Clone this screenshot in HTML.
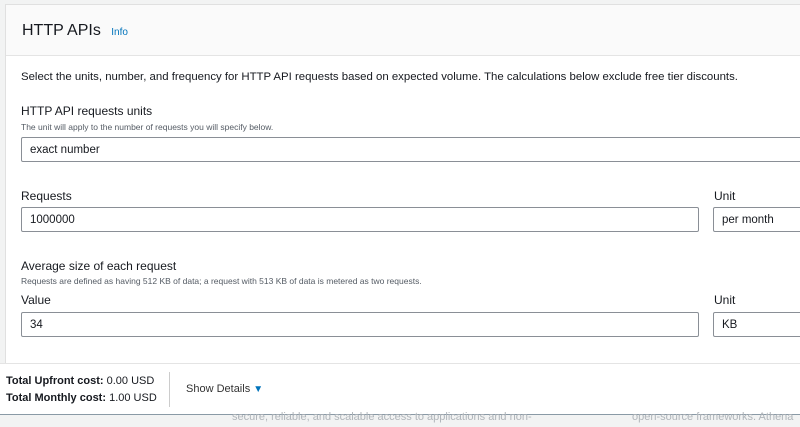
<!DOCTYPE html>
<html><head><style>
body{margin:0;width:800px;height:426px;overflow:hidden;background:#f2f3f3;font-family:"Liberation Sans",sans-serif;color:#16191f;position:relative}
.panel{position:absolute;left:5px;top:4px;width:800px;height:420px;background:#fff;border:1px solid #e0e0e0;border-right:none}
.hdr{height:50px;background:#fafafa;border-bottom:1px solid #e4e4e4;position:relative}
.t{position:absolute;font-size:12px;white-space:nowrap}
.s{color:#545b64}
.in{position:absolute;height:25px;border:1px solid #8a8f96;border-radius:2px;box-sizing:border-box;font-size:11.5px;padding:6px 0 0 8px;background:#fff}
.foot{position:absolute;left:0;top:363px;width:800px;height:50px;background:#fff;border-top:1px solid #e4e4e4}
.bot{position:absolute;left:0;top:414px;width:800px;height:12px;background:#f2f3f3;border-top:1px solid #8a9aa6}
</style></head><body>
<div class="panel"><div class="hdr">
<div class="t" style="left:16px;top:17px;font-size:16px">HTTP APIs <span style="font-size:10px;color:#0073bb;margin-left:6px">Info</span></div></div></div>
<div class="t" style="left:21px;top:71px;font-size:11.4px">Select the units, number, and frequency for HTTP API requests based on expected volume. The calculations below exclude free tier discounts.</div>
<div class="t" style="left:21px;top:104px">HTTP API requests units</div>
<div class="t s" style="left:21px;top:122px;font-size:8.5px">The unit will apply to the number of requests you will specify below.</div>
<div class="in" style="left:21px;top:137px;width:800px">exact number</div>
<div class="t" style="left:21px;top:189px">Requests</div>
<div class="t" style="left:714px;top:189px">Unit</div>
<div class="in" style="left:21px;top:207px;width:678px">1000000</div>
<div class="in" style="left:713px;top:207px;width:100px">per month</div>
<div class="t" style="left:21px;top:259px">Average size of each request</div>
<div class="t s" style="left:21px;top:276px;font-size:8.5px">Requests are defined as having 512 KB of data; a request with 513 KB of data is metered as two requests.</div>
<div class="t" style="left:21px;top:293px">Value</div>
<div class="t" style="left:714px;top:293px">Unit</div>
<div class="in" style="left:21px;top:312px;width:678px">34</div>
<div class="in" style="left:713px;top:312px;width:100px">KB</div>
<div class="foot">
<div class="t" style="left:6px;top:11px;font-size:11px"><b>Total Upfront cost:</b> 0.00 USD</div>
<div class="t" style="left:6px;top:28px;font-size:11px"><b>Total Monthly cost:</b> 1.00 USD</div>
<div style="position:absolute;left:169px;top:8px;width:1px;height:35px;background:#ccc"></div>
<div class="t" style="left:186px;top:19px;font-size:11px;color:#333">Show Details <span style="color:#0073bb;font-size:10px">▼</span></div>
</div>
<div class="bot">
<div class="t" style="left:232px;top:-4px;font-size:11px;color:#b0b5ba">secure, reliable, and scalable access to applications and non-</div>
<div class="t" style="left:632px;top:-4px;font-size:11px;color:#b0b5ba">open-source frameworks. Athena</div>
</div>
</body></html>
